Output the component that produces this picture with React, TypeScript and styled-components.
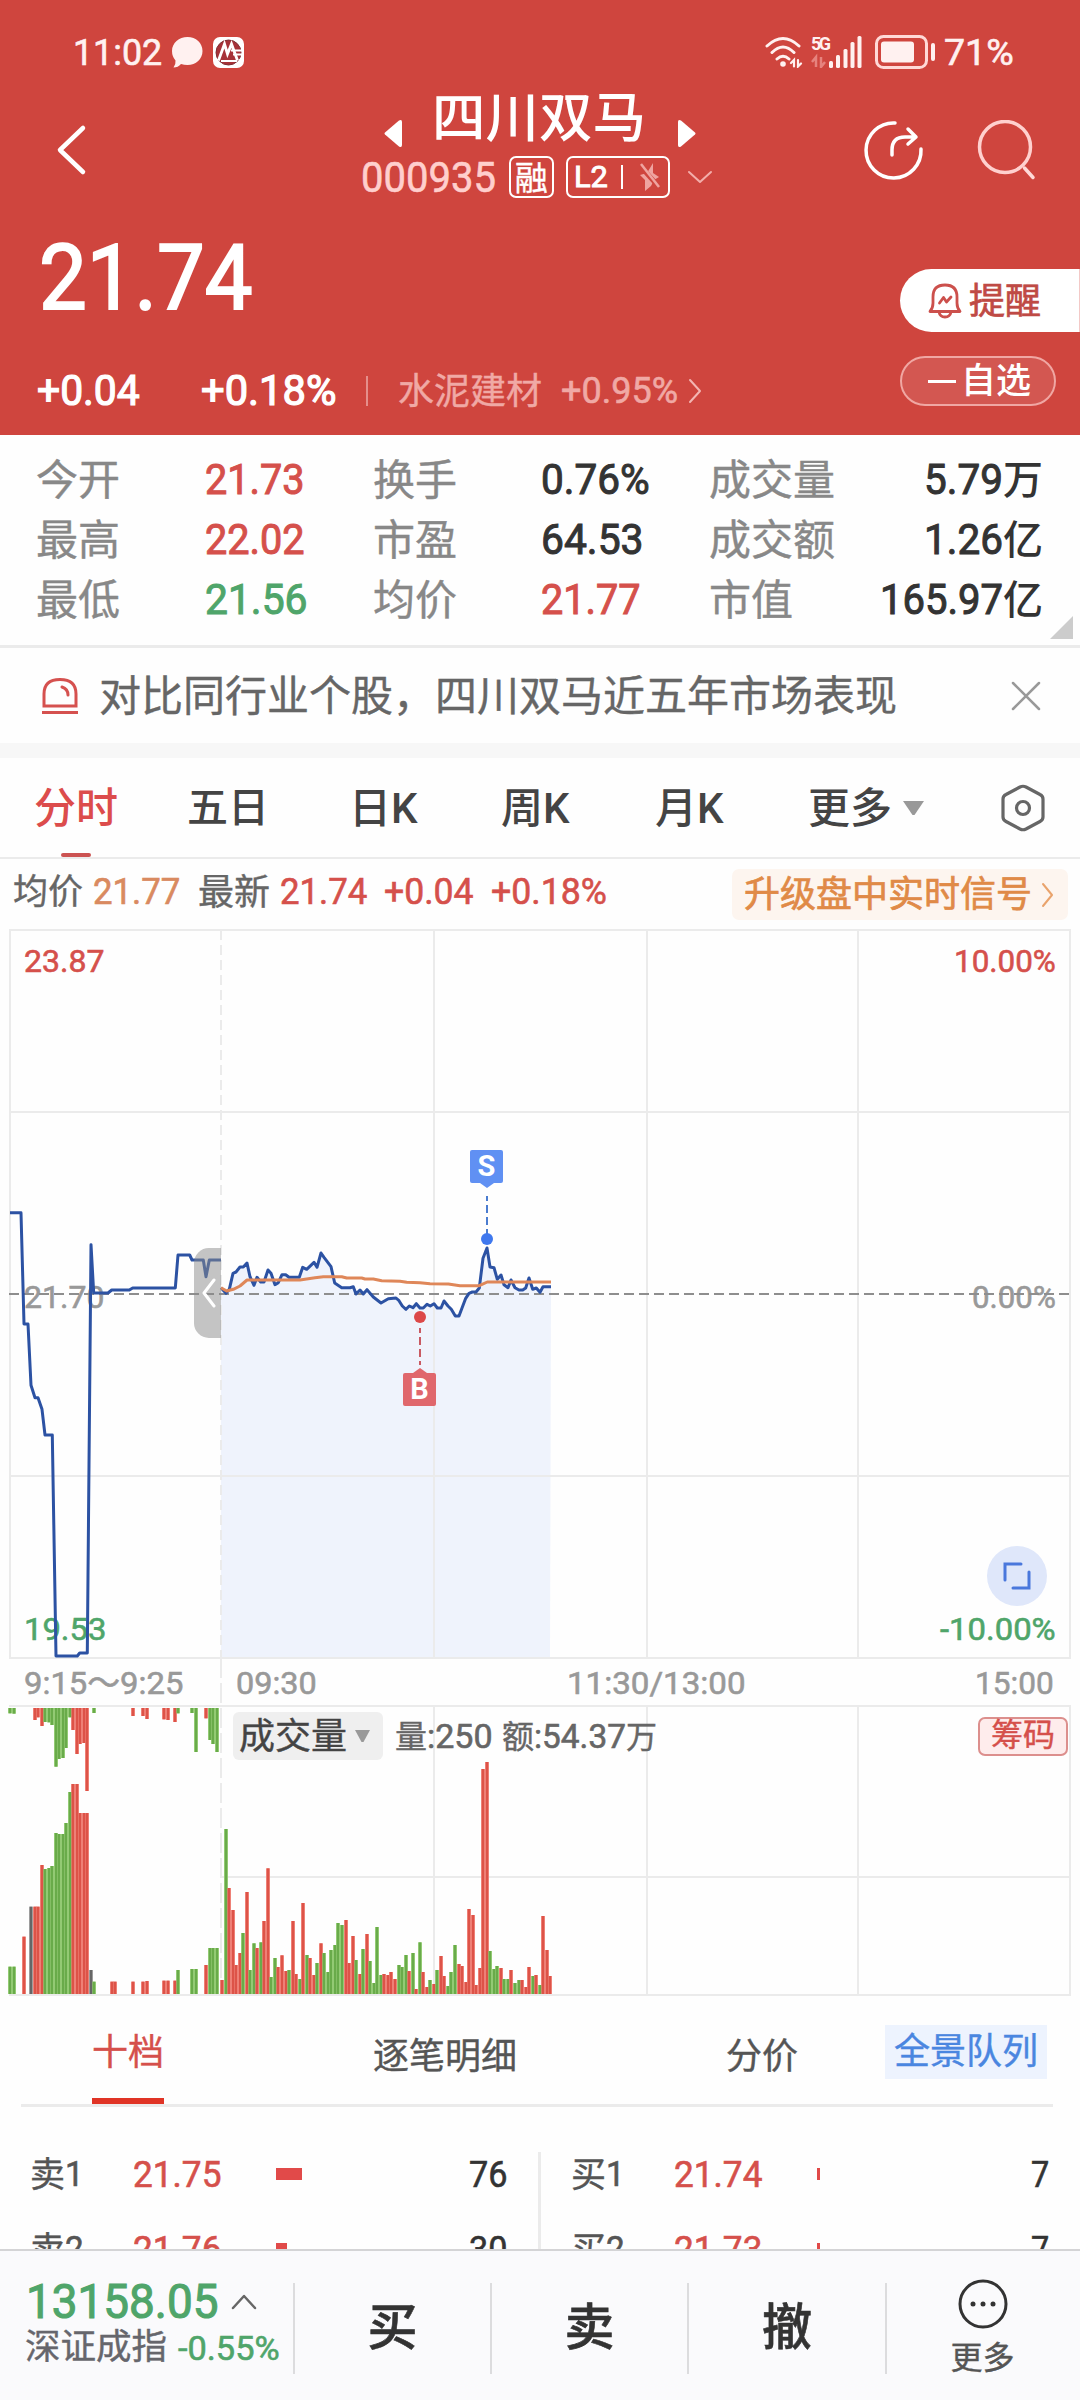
import React, { useLayoutEffect, useRef, useState } from "react";
import styled, { createGlobalStyle, css } from "styled-components";

const RED = "#d5504b";
const GREEN = "#4fa56a";
const HEAD = "#cf453e";
const LINE = "#ebebeb";

const Global = createGlobalStyle`
  *, *::before, *::after { box-sizing: border-box; }
  body { margin: 0; background: #fff; }
  svg { display: block; flex: none; }
`;

const Page = styled.div`
  width: 1080px;
  height: 2400px;
  display: flex;
  flex-direction: column;
  overflow: hidden;
  background: #fefefe;
  color: #333;
  font-family: Roboto, "Noto Sans CJK SC", sans-serif;
`;

/* ---------- text ---------- */

type TextProps = { $size: number; $color?: string; $weight?: number; $ml?: number; $dy?: number; $ink?: number };

const Text = styled.span<TextProps>`
  display: block;
  flex: none;
  white-space: nowrap;
  font-size: ${(p) => p.$size}px;
  line-height: ${(p) => p.$size}px;
  font-weight: ${(p) => p.$weight ?? 400};
  color: ${(p) => p.$color ?? "inherit"};
  margin-left: ${(p) => p.$ml ?? 0}px;
  -webkit-text-stroke: ${(p) => p.$ink ?? (p.$weight ? 0 : 0.4)}px currentColor;
  padding-top: ${(p) => p.$dy ?? 2}px;
`;

const FitBox = styled(Text)<{ $w: number }>`
  width: ${(p) => p.$w}px;
`;

const FitInner = styled.span`
  display: inline-block;
  transform-origin: 0 50%;
`;

/* Condensed figures: the text is squeezed horizontally to the given width. */
function Fit({ w, size, color, ink = 0.6, ml, dy = 0, children }: {
  w: number; size: number; color?: string; ink?: number; ml?: number; dy?: number; children: React.ReactNode;
}) {
  const ref = useRef<HTMLSpanElement>(null);
  const [k, setK] = useState(1);
  useLayoutEffect(() => {
    if (ref.current) setK(w / ref.current.offsetWidth);
  }, [w, size]);
  return (
    <FitBox $w={w} $size={size} $color={color} $ink={ink} $ml={ml} $dy={dy}>
      <FitInner ref={ref} style={{ transform: `scaleX(${k})` }}>{children}</FitInner>
    </FitBox>
  );
}

/* ---------- header ---------- */

const Header = styled.header`
  height: 435px;
  flex: none;
  background: ${HEAD};
  color: #fff;
`;

const StatusBar = styled.div`
  height: 80px;
  padding: 24px 66px 0 73px;
  display: flex;
  justify-content: space-between;
`;

const StatusGroup = styled.div<{ $gap: number }>`
  display: flex;
  align-items: center;
  gap: ${(p) => p.$gap}px;
  height: 56px;
`;

const Nav = styled.div`
  height: 140px;
  display: grid;
  grid-template-columns: 363px 350px 1fr;
  align-items: center;
`;

const BackBox = styled.div`padding-left: 55px;`;

const TitleBlock = styled.div`height: 140px;`;

const TitleRow = styled.div`
  height: 71px;
  padding-left: 21px;
  display: flex;
  align-items: center;
`;

const TriBox = styled.div<{ $ml?: number }>`
  padding-top: 35px;
  margin-left: ${(p) => p.$ml ?? 0}px;
`;

const CodeRow = styled.div`
  height: 52px;
  margin-left: -2px;
  display: flex;
  align-items: center;
`;

const Badge = styled.div<{ $w: number; $ml: number }>`
  width: ${(p) => p.$w}px;
  height: 42px;
  margin-left: ${(p) => p.$ml}px;
  border: 2px solid #fff;
  border-radius: 7px;
  display: flex;
  align-items: center;
  justify-content: center;
`;

const Rule = styled.i<{ $h: number; $ml?: number; $color: string; $w?: number }>`
  display: block;
  flex: none;
  width: ${(p) => p.$w ?? 2}px;
  height: ${(p) => p.$h}px;
  margin-left: ${(p) => p.$ml ?? 0}px;
  background: ${(p) => p.$color};
`;

const NavActions = styled.div`
  display: flex;
  gap: 50px;
  padding-left: 151px;
`;

const PriceArea = styled.div`
  height: 215px;
  display: flex;
  justify-content: space-between;
`;

const PriceCol = styled.div`padding: 13px 0 0 37px;`;

const ChangeRow = styled.div`
  height: 60px;
  margin-top: 37px;
  display: flex;
  align-items: center;
`;

const ActionCol = styled.div`
  width: 180px;
  padding-top: 49px;
  display: flex;
  flex-direction: column;
  gap: 24px;
`;

const Remind = styled.div`
  height: 63px;
  padding-left: 28px;
  border-radius: 32px 0 0 32px;
  border-right: 1px solid #f3c9c7;
  background: #fff;
  display: flex;
  align-items: center;
`;

const Favorite = styled.div`
  width: 156px;
  height: 50px;
  padding-left: 26px;
  border: 2px solid #f0a7a3;
  border-radius: 25px;
  background: rgba(255, 255, 255, 0.1);
  display: flex;
  align-items: center;
`;

/* ---------- figures ---------- */

const Stats = styled.section`
  position: relative;
  flex: none;
  height: 213px;
  padding: 15px 37px 0 36px;
  border-bottom: 3px solid ${LINE};
  display: grid;
  grid-template-columns: 169px 168px 168px 168px 130px 1fr;
  grid-auto-rows: 60px;
  align-items: center;
`;

const Joined = styled.div<{ $end?: boolean }>`
  display: flex;
  align-items: center;
  justify-content: ${(p) => (p.$end ? "flex-end" : "flex-start")};
`;

const Corner = styled.svg`
  position: absolute;
  right: 7px;
  bottom: 6px;
`;

const Tip = styled.section`
  flex: none;
  height: 95px;
  padding: 0 39px 0 41px;
  display: flex;
  align-items: center;
  justify-content: space-between;
`;

const Band = styled.div`
  flex: none;
  height: 15px;
  background: #f7f7f7;
`;

const Tabs = styled.nav`
  flex: none;
  height: 101px;
  padding-left: 34px;
  border-bottom: 2px solid ${LINE};
  display: grid;
  grid-template-columns: 153px 162px 152px 154px 153px 192px 1fr;
`;

const Tab = styled.div<{ $active?: boolean }>`
  position: relative;
  height: 99px;
  display: flex;
  align-items: center;
  gap: 10px;
  color: ${(p) => (p.$active ? "#dc4c4c" : "#444")};
  ${(p) => p.$active && css`
    &::after {
      content: "";
      position: absolute;
      left: 27px;
      bottom: 0;
      width: 30px;
      height: 4px;
      border-radius: 2px;
      background: #cc5352;
    }
  `}
`;

const Legend = styled.div`
  flex: none;
  height: 69px;
  padding: 0 12px 0 13px;
  display: flex;
  justify-content: space-between;
`;

const LegendItems = styled.div`
  height: 65px;
  display: flex;
  align-items: center;
`;

const Signal = styled.div`
  width: 336px;
  height: 51px;
  margin-top: 10px;
  padding: 0 14px 0 12px;
  border-radius: 7px;
  background: #fdf5ef;
  display: flex;
  align-items: center;
  justify-content: space-between;
`;

/* ---------- chart ---------- */

const ChartBlock = styled.section`
  position: relative;
  flex: none;
  height: 1070px;
  display: grid;
  grid-template-rows: 731px 47px 292px;
`;

const ChartSvg = styled.svg`
  position: absolute;
  left: 0;
  top: 0;
`;

const Scale = styled.div`
  display: grid;
  grid-template-columns: 1fr auto;
  grid-template-rows: 66px 605px 48px;
  padding: 0 24px;
  align-items: center;
`;

const TimeAxis = styled.div`
  padding: 0 26px 0 24px;
  display: flex;
  align-items: center;
`;

const Spring = styled.i<{ $w?: number }>`
  flex: ${(p) => (p.$w ? "none" : "1")};
  width: ${(p) => p.$w ?? 0}px;
`;

const VolumeBar = styled.div`
  position: relative;
  z-index: 1;
  height: 60px;
  padding: 0 12px 0 233px;
  display: flex;
  align-items: center;
`;

const Picker = styled.div`
  width: 150px;
  height: 48px;
  padding: 0 12px 0 6px;
  border-radius: 6px;
  background: #efefef;
  display: flex;
  align-items: center;
  justify-content: space-between;
`;

const Chips = styled.div`
  width: 90px;
  height: 39px;
  border: 2px solid #dc8f8d;
  border-radius: 7px;
  background: #feecec;
  display: flex;
  justify-content: center;
`;

const Handle = styled.div`
  position: absolute;
  left: 194px;
  top: 320px;
  width: 27px;
  height: 90px;
  padding-left: 7px;
  border-radius: 15px 0 0 15px;
  background: rgba(138, 138, 138, 0.5);
  display: flex;
  align-items: center;
`;

const Expand = styled.div`
  position: absolute;
  left: 987px;
  top: 618px;
  width: 60px;
  height: 60px;
  border-radius: 50%;
  background: #dfe7fa;
  display: flex;
  align-items: center;
  justify-content: center;
`;

const Marker = styled.div<{ $x: number; $y: number; $bg: string; $down?: boolean }>`
  position: absolute;
  left: ${(p) => p.$x}px;
  top: ${(p) => p.$y}px;
  width: 33px;
  height: 33px;
  border-radius: 2px;
  background: ${(p) => p.$bg};
  color: #fff;
  font: 700 29px/33px Roboto, sans-serif;
  text-align: center;
  &::after {
    content: "";
    position: absolute;
    left: 10px;
    ${(p) => (p.$down ? "top: 33px; border-top" : "bottom: 33px; border-bottom")}: 5px solid ${(p) => p.$bg};
    border-left: 7px solid transparent;
    border-right: 7px solid transparent;
  }
`;

/* ---------- order book ---------- */

const BookTabs = styled.nav`
  flex: none;
  height: 109px;
  margin: 0 27px 0 21px;
  border-bottom: 3px solid ${LINE};
  display: grid;
  grid-template-columns: 71px 281px 353px 159px 1fr;
`;

const BookTab = styled.div<{ $active?: boolean }>`
  justify-self: start;
  height: 106px;
  padding-top: ${(p) => (p.$active ? 35 : 39)}px;
  color: ${(p) => (p.$active ? RED : "#555")};
  border-bottom: ${(p) => (p.$active ? "6px solid #e03426" : "0")};
`;

const Panorama = styled.div`
  width: 162px;
  height: 54px;
  margin-top: 27px;
  padding: 7px 0 0 9px;
  background: #edf3fe;
`;

const Book = styled.section`
  flex: none;
  height: 142px;
  overflow: hidden;
  display: grid;
  grid-template-columns: 538px 3px 1fr;
`;

const BookSide = styled.div<{ $right?: boolean }>`
  height: 180px;
  padding: ${(p) => (p.$right ? "30px 31px 0 30px" : "30px 31px 0 30px")};
`;

const BookDivider = styled.div`
  margin-top: 45px;
  background: ${LINE};
`;

const BookRow = styled.div`
  height: 75px;
  display: grid;
  grid-template-columns: 103px 143px 1fr auto;
  align-items: center;
`;

const DepthBar = styled.i`
  display: block;
  height: 12px;
  margin-top: -2px;
  background: #e14a49;
`;

/* ---------- bottom bar ---------- */

const Footer = styled.footer`
  flex: none;
  height: 151px;
  border-top: 2px solid #d4d4d6;
  background: #fafafc;
  display: grid;
  grid-template-columns: 293px 197px 197px 198px 1fr;
`;

const IndexCol = styled.div`
  padding: 28px 0 0 25px;
`;

const IndexRow = styled.div<{ $h: number }>`
  height: ${(p) => p.$h}px;
  display: flex;
  align-items: center;
`;

const TradeButton = styled.div`
  margin: 32px 0 33px;
  border-left: 2px solid #dcdcde;
  padding-bottom: 4px;
  display: flex;
  align-items: center;
  justify-content: center;
`;

const More = styled.div`
  margin: 32px 0 33px;
  padding-right: 2px;
  border-left: 2px solid #dcdcde;
  display: flex;
  flex-direction: column;
  align-items: center;
  gap: 11px;
`;

const MoreIcon = styled.svg`
  margin-top: -4px;
`;

/* ---------- data ---------- */

type Pt = [number, number];
const parse = (s: string, dx: number, dy: number): Pt[] =>
  s.trim().split(/\s+/).map((p) => {
    const [x, y] = p.split(",").map(Number);
    return [x / 3 + dx, y / 3 + dy];
  });
const toStr = (pts: Pt[]) => pts.map(([x, y]) => `${x.toFixed(1)},${y.toFixed(1)}`).join(" ");

const auction = parse(
  "30,158 63,158 72,492 84,492 93,676 105,713 114,713 126,748 135,825 157,825 168,1488 232,1488 239,1479 262,1479 273,254 281,399 324,399 335,390 388,390 398,384 526,384 534,285 569,285 576,300 610,300 618,350 628,300 663,300",
  0, 232);

const price = parse(
  "63,473 78,490 88,478 99,430 108,426 120,411 130,411 141,399 150,440 162,466 171,442 182,456 192,456 204,420 213,430 225,464 235,458 246,434 257,434 267,442 298,442 308,412 320,418 342,397 351,412 363,369 372,382 393,410 404,459 425,473 450,473 460,470 468,492 480,480 490,492 501,479 520,501 543,519 565,506 588,504 597,512 607,528 618,538 628,528 639,533 649,521 660,534 670,534 681,523 691,528 702,521 712,534 723,534 732,513 744,528 754,538 766,558 777,558 797,505 807,490 817,486 828,486 838,474 849,385 861,354 870,411 882,413 892,448 903,435 912,464 924,473 933,450 945,473 957,480 968,480 977,474 987,444 998,478 1009,474 1020,487 1029,470 1053,470",
  200, 202);

const average = parse(
  "63,473 80,483 100,478 120,468 141,450 300,450 345,443 370,440 425,440 440,444 485,444 495,447 520,447 545,452 600,454 620,457 660,458 690,461 745,462 780,467 838,467 862,456 1053,456",
  200, 202);

const auctionVolume =
  "G30:980 G42:980 R72:890 K93:800 R105:800 R114:800 R126:675 G135:687 G147:684 G156:678 G168:579 G177:582 G189:582 G198:549 G210:456 R219:432 R231:432 R240:519 R252:519 R261:519 K273:990 G282:1025 R336:1025 R345:1025 R399:1025 R429:1025 R441:1023 R492:1022 R504:1022 R525:1022 G534:990 G576:987 G588:987 R618:975 G630:924 G639:924 G651:924";

const unmatched =
  "G30:220 G42:221 R105:240 R114:232 R126:258 G135:246 G147:247 G156:255 G168:380 G177:357 G189:354 G198:324 G210:232 R219:270 R231:342 R240:312 R252:309 R261:453 G282:219 R399:228 R429:228 R441:237 R492:238 R504:240 R525:246 G534:220 G576:219 G588:336 R618:235 G630:300 G639:312 G651:336";

const volume =
  "R66:870 G78:417 R87:594 R99:660 R108:825 R120:789 G129:729 R141:606 G150:840 G162:760 R171:774 G183:757 R192:693 R204:535 G213:861 G225:804 R234:831 R246:796 R258:843 G267:840 R279:693 R288:852 G300:867 R309:639 G321:795 R330:804 R342:855 G351:819 R363:760 G372:789 G384:846 G393:780 G405:765 G414:699 G426:705 R438:690 R447:819 R459:738 G468:810 R480:852 G489:777 R501:732 G510:813 G522:879 G531:711 G543:855 R552:852 R564:855 R573:846 R585:867 G597:825 G606:831 G618:795 R627:843 G639:789 R648:897 G660:757 R669:846 R681:891 G690:870 R702:882 G711:840 R723:798 R732:858 G744:888 G753:846 G765:765 R777:822 R786:828 R798:876 R807:657 R819:675 R828:885 R840:834 R849:237 R861:216 G870:783 G882:837 G891:828 R903:834 G912:867 G924:867 R933:840 G945:879 G957:870 R966:870 R978:891 R987:831 G999:858 R1008:855 G1020:885 R1029:678 R1041:780 R1050:858";

type Bar = { c: string; x: number; y: number };
const bars = (s: string, dx: number, dy: number): Bar[] =>
  s.split(" ").map((b) => {
    const [x, y] = b.slice(1).split(":").map(Number);
    return { c: b[0], x: x / 3 + dx, y: y / 3 + dy };
  });

const CORE: Record<string, string> = { G: "#69ab4a", R: "#dd5348", K: "#666" };
const EDGE: Record<string, string> = { G: "#aadb8c", R: "#f79a90", K: "#bbb" };

function Bars({ data, base }: { data: Bar[]; base: number }) {
  const box = (b: Bar, w: number) => ({
    x: b.x - w / 2,
    y: Math.min(b.y, base),
    width: w,
    height: Math.abs(base - b.y),
  });
  return (
    <g>
      {data.map((b, i) => <rect key={`e${i}`} {...box(b, 4)} fill={EDGE[b.c]} />)}
      {data.map((b, i) => <rect key={`c${i}`} {...box(b, 2.7)} fill={CORE[b.c]} />)}
    </g>
  );
}

function ChartDrawing() {
  const area = `${toStr(price)} 550,729 221,729`;
  return (
    <ChartSvg width="1080" height="1070" viewBox="0 0 1080 1070" fill="none">
      <polygon points={area} fill="#3c78e8" fillOpacity="0.08" />
      <g stroke={LINE} strokeWidth="2">
        <path d="M9 2H1071M10 184H1070M10 548H1070M9 730H1071M10 1V730M1070 1V730" />
        <path d="M434 2V730M647 2V730M858 2V730" />
        <path d="M9 778H1071M221 949H1070M9 1067H1071M434 778V1067M647 778V1067M858 778V1067M1070 778V1067" />
        <path d="M221 2V730" strokeDasharray="10 5" />
        <path d="M221 730V1067" strokeDasharray="20 5" />
      </g>
      <path d="M9 366H1070" stroke="#8e8e8e" strokeWidth="2" strokeDasharray="10 5" />
      <Bars data={bars(auctionVolume, 0, 712)} base={1066} />
      <Bars data={bars(unmatched, 0, 712)} base={780} />
      <Bars data={bars(volume, 200, 762)} base={1066} />
      <g strokeLinejoin="round" strokeWidth="3">
        <polyline points={toStr(auction)} stroke="#2c52a3" />
        <polyline points={toStr(price)} stroke="#2c52a3" />
        <polyline points={toStr(average)} stroke="#df8759" />
      </g>
      <path d="M487 268V306" stroke="#4a7cd0" strokeWidth="2" strokeDasharray="8 4" strokeDashoffset="3" />
      <circle cx="487" cy="311" r="6" fill="#3f78ee" />
      <circle cx="420" cy="389" r="6" fill="#dc4848" />
      <path d="M420 400V437" stroke="#c95a62" strokeWidth="2" strokeDasharray="8 4" strokeDashoffset="3" />
    </ChartSvg>
  );
}

/* ---------- icons ---------- */

const WifiIcon = () => (
  <svg width="38" height="32" viewBox="0 0 38 32" fill="none" stroke="#fff1f0" strokeWidth="3" strokeLinecap="round">
    <path d="M2 10Q18 -5 34 10M7 16.5Q18 5.5 29 16.5M12 23Q18 17.500 24 23" />
    <circle cx="18" cy="28" r="2.800" fill="#fff1f0" stroke="none" />
    <path d="M26 27L29 24V30.500M33 24V30.500L36 27.500" strokeWidth="2.200" />
  </svg>
);

const NetBox = styled.div`
  position: relative;
  width: 52px;
  height: 32px;
  margin-right: 4px;
  font: 700 18px/16px Roboto, sans-serif;
  color: #fff1f0;
  letter-spacing: -2.5px;
`;
const NetBars = styled.svg`
  position: absolute;
  left: 0;
  top: 0;
`;

const Network = () => (
  <NetBox>
    5G
    <NetBars width="52" height="32" viewBox="0 0 52 32">
      <g fill="#fff1f0">
        <rect x="18" y="25" width="4" height="7" rx="1.500" />
        <rect x="25" y="19" width="4" height="13" rx="1.500" />
        <rect x="32.500" y="13" width="4" height="19" rx="1.500" />
        <rect x="39.500" y="6" width="4" height="26" rx="1.500" />
        <rect x="46.500" y="0" width="4" height="32" rx="1.500" />
      </g>
      <path d="M1 26L5 21V31M10 21V31L14 26" fill="none" stroke="#e6837e" strokeWidth="2.500" />
    </NetBars>
  </NetBox>
);

const BatteryIcon = () => (
  <svg width="61" height="34" viewBox="0 0 61 34">
    <rect x="1.500" y="1.500" width="50" height="31" rx="7" fill="none" stroke="#ffd9d7" strokeWidth="3" />
    <rect x="6" y="6.500" width="33" height="21" rx="3" fill="#fff1f0" />
    <rect x="56" y="8" width="4" height="18" rx="2" fill="#fff1f0" />
  </svg>
);

const ChatIcon = () => (
  <svg width="31" height="32" viewBox="0 0 31 32">
    <path d="M15.500 1C24 1 30.500 7 30.500 15S24 29 15.500 29Q12 29 9 28Q6 31.500 1.500 31.500Q4 28 3.500 24.500Q0 20.500 0 15C0 7 7 1 15.500 1Z" fill="#fff1f0" />
  </svg>
);

const BankIcon = () => (
  <svg width="31" height="31" viewBox="0 0 31 31" fill="none">
    <rect width="31" height="31" rx="7" fill="#fff" />
    <circle cx="15.500" cy="15.500" r="12.500" fill="#a63238" stroke="#7d2c32" />
    <path d="M5.500 23.500L11.500 7L14.500 17L18.500 7L24.500 23.500" stroke="#fff" strokeWidth="2.800" />
    <path d="M8 24H24M18 13.500H29M20 17.500H29" stroke="#fff" strokeWidth="1.800" />
  </svg>
);

const Tri = ({ flip }: { flip?: boolean }) => (
  <svg width="18" height="27" viewBox="0 0 18 27">
    <path d={flip ? "M17 12.500Q18 13.500 17 14.500L3 26.500Q0 28 0 25V2Q0 -1 3 .5Z" : "M1 12.500Q0 13.500 1 14.500L15 26.500Q18 28 18 25V2Q18 -1 15 .5Z"} fill="#fff" />
  </svg>
);

const Chevron = ({ w, h, d, color, sw = 2 }: { w: number; h: number; d: string; color: string; sw?: number }) => (
  <svg width={w} height={h} viewBox={`0 0 ${w} ${h}`} fill="none" stroke={color} strokeWidth={sw} strokeLinecap="round" strokeLinejoin="round">
    <path d={d} />
  </svg>
);

const Caret = ({ w, h }: { w: number; h: number }) => (
  <svg width={w} height={h}><path d={`M1 0H${w - 1}L${w / 2 + 1} ${h}H${w / 2 - 1}Z`} fill="#999" /></svg>
);

const FlashOff = () => (
  <svg width="22" height="30" viewBox="0 0 22 30">
    <path d="M14 1L8 11L1 13L6 18L6 29L12 24L15 18L20 15L14 11Z" fill="#efa4a0" />
    <path d="M1 4L21 26" stroke={HEAD} strokeWidth="5" />
    <path d="M2 2L20 25" stroke="#efa4a0" strokeWidth="2.500" />
  </svg>
);

const ShareIcon = () => (
  <svg width="60" height="60" viewBox="0 0 60 60" fill="none" stroke="#fff" strokeWidth="3.500" strokeLinecap="round" strokeLinejoin="round">
    <path d="M31 3A27.500 27.500 0 1 0 57 29" />
    <path d="M28 35V30Q28 17 41 17H51M44 9L52 17L44 24" />
  </svg>
);

const SearchIcon = () => (
  <svg width="62" height="60" viewBox="0 0 62 60" fill="none" stroke="#ffd0ce" strokeWidth="3.500" strokeLinecap="round">
    <circle cx="31" cy="27" r="25.500" />
    <path d="M50.500 48L59 57.500" stroke="#ffd9d7" />
  </svg>
);

const BellIcon = () => (
  <svg width="34" height="36" viewBox="0 0 34 36" fill="none" stroke="#cc504c" strokeWidth="2.800" strokeLinecap="round" strokeLinejoin="round">
    <path d="M5 20V14Q5 2 17 2T29 14V20Q29 25 32 28.500H2Q5 25 5 20Z" />
    <path d="M11 29Q12 34 17 34T23 29M11.500 20L15.500 14.500L18.500 19L23 14" />
  </svg>
);

const SirenIcon = () => (
  <svg width="38" height="38" viewBox="0 0 38 38" fill="none" stroke="#d5514f" strokeWidth="3">
    <path d="M3 29V17Q3 2.500 19 2.500T35 17V29Z" />
    <path d="M21 10Q27 12 27 18" strokeLinecap="round" />
    <path d="M1 35.500H37" />
  </svg>
);

const HexIcon = () => (
  <svg width="46" height="48" viewBox="0 0 46 48" fill="none" stroke="#666" strokeWidth="3.200" strokeLinejoin="round">
    <path d="M20 3Q23 1.500 26 3L40 10.500Q43 12 43 15V33Q43 36 40 37.500L26 45Q23 46.500 20 45L6 37.500Q3 36 3 33V15Q3 12 6 10.500Z" />
    <circle cx="23" cy="24" r="6.500" />
  </svg>
);

/* ---------- view ---------- */

function Amount({ figure, w, unit }: { figure: string; w: number; unit: string }) {
  return (
    <Joined $end>
      <Fit w={w} size={42} ink={1}>{figure}</Fit>
      <Text $size={40} $weight={500}>{unit}</Text>
    </Joined>
  );
}

function Quote({ name, no, value, bar, qty, qw }: {
  name: string; no: string; value: string; bar: number; qty: string; qw: number;
}) {
  return (
    <BookRow>
      <Joined>
        <Text $size={35} $color="#555">{name}</Text>
        <Fit w={19} size={35} color="#555">{no}</Fit>
      </Joined>
      <Fit w={88} size={36} color={RED}>{value}</Fit>
      <DepthBar style={{ width: bar }} />
      <Fit w={qw} size={36}>{qty}</Fit>
    </BookRow>
  );
}

export default function App() {
  return (
    <>
      <Global />
      <Page>
        <Header>
          <StatusBar>
            <StatusGroup $gap={10}>
              <Fit w={89} size={37} color="#fff1f0">11:02</Fit>
              <ChatIcon />
              <BankIcon />
            </StatusGroup>
            <StatusGroup $gap={8}>
              <WifiIcon />
              <Network />
              <BatteryIcon />
              <Fit w={70} size={37} color="#fff1f0">71%</Fit>
            </StatusGroup>
          </StatusBar>
          <Nav>
            <BackBox>
              <Chevron w={32} h={52} d="M28 4L5 26L28 48" color="#fff" sw={4.5} />
            </BackBox>
            <TitleBlock>
              <TitleRow>
                <TriBox><Tri /></TriBox>
                <Text $size={53.5} $weight={500} $ml={30} $dy={6}>四川双马</Text>
                <TriBox $ml={32}><Tri flip /></TriBox>
              </TitleRow>
              <CodeRow>
                <Fit w={135} size={43} color="#ffcfcd">000935</Fit>
                <Badge $w={45} $ml={13}><Text $size={33}>融</Text></Badge>
                <Badge $w={105} $ml={12}>
                  <Fit w={34} size={29} ink={0.9}>L2</Fit>
                  <Rule $h={24} $ml={13} $color="#fff" />
                  <Spring $w={16} />
                  <FlashOff />
                </Badge>
                <Spring $w={17} />
                <Chevron w={26} h={14} d="M2 2L13 12L24 2" color="#f3aeaa" />
              </CodeRow>
            </TitleBlock>
            <NavActions>
              <ShareIcon />
              <SearchIcon />
            </NavActions>
          </Nav>
          <PriceArea>
            <PriceCol>
              <Fit w={214} size={91} ml={2} ink={2}>21.74</Fit>
              <ChangeRow>
                <Fit w={103} size={42} ink={1.2}>+0.04</Fit>
                <Fit w={135} size={42} ink={1.2} ml={61}>+0.18%</Fit>
                <Rule $h={30} $ml={30} $color="#e58f8b" />
                <Text $size={36} $ml={30} $color="#f0a9a5">水泥建材</Text>
                <Fit w={117} size={36} ml={19} color="#f0a9a5">+0.95%</Fit>
                <Spring $w={10} />
                <Chevron w={14} h={26} d="M2 2L12 13L2 24" color="#f3b5b2" />
              </ChangeRow>
            </PriceCol>
            <ActionCol>
              <Remind>
                <BellIcon />
                <Text $size={36} $ml={7} $color="#bf4a45" $ink={0.7}>提醒</Text>
              </Remind>
              <Favorite>
                <Rule $w={28} $h={3} $color="#fff" />
                <Text $size={35} $ml={5} $weight={500} $dy={0}>自选</Text>
              </Favorite>
            </ActionCol>
          </PriceArea>
        </Header>

        <Stats>
          <Text $size={42} $color="#888">今开</Text>
          <Fit w={100} size={42} color={RED} ink={1}>21.73</Fit>
          <Text $size={42} $color="#888">换手</Text>
          <Fit w={109} size={42} ink={1}>0.76%</Fit>
          <Text $size={42} $color="#888">成交量</Text>
          <Amount figure="5.79" w={79} unit="万" />
          <Text $size={42} $color="#888">最高</Text>
          <Fit w={100} size={42} color={RED} ink={1}>22.02</Fit>
          <Text $size={42} $color="#888">市盈</Text>
          <Fit w={103} size={42} ink={1}>64.53</Fit>
          <Text $size={42} $color="#888">成交额</Text>
          <Amount figure="1.26" w={79} unit="亿" />
          <Text $size={42} $color="#888">最低</Text>
          <Fit w={103} size={42} color={GREEN} ink={1}>21.56</Fit>
          <Text $size={42} $color="#888">均价</Text>
          <Fit w={100} size={42} color={RED} ink={1}>21.77</Fit>
          <Text $size={42} $color="#888">市值</Text>
          <Amount figure="165.97" w={123} unit="亿" />
          <Corner width="23" height="23"><path d="M23 0V23H0Z" fill="#ccc" /></Corner>
        </Stats>

        <Tip>
          <SirenIcon />
          <Text $size={42} $ml={20} $color="#666">对比同行业个股，四川双马近五年市场表现</Text>
          <Spring />
          <Chevron w={30} h={30} d="M2 2L28 28M28 2L2 28" color="#999" sw={2.5} />
        </Tip>
        <Band />

        <Tabs>
          <Tab $active><Text $size={42} $weight={500}>分时</Text></Tab>
          <Tab><Text $size={41} $weight={500}>五日</Text></Tab>
          <Tab><Text $size={42} $weight={500}>日K</Text></Tab>
          <Tab><Text $size={42} $weight={500}>周K</Text></Tab>
          <Tab><Text $size={42} $weight={500}>月K</Text></Tab>
          <Tab><Text $size={42} $weight={500}>更多</Text><Caret w={23} h={14} /></Tab>
          <Tab><HexIcon /></Tab>
        </Tabs>

        <Legend>
          <LegendItems>
            <Text $size={35} $color="#666">均价</Text>
            <Fit w={87} size={36} ml={10} color="#d98a60">21.77</Fit>
            <Text $size={36} $ml={18} $color="#666">最新</Text>
            <Fit w={87} size={36} ml={10} color={RED}>21.74</Fit>
            <Fit w={90} size={36} ml={17} color={RED}>+0.04</Fit>
            <Fit w={116} size={36} ml={17} color={RED}>+0.18%</Fit>
          </LegendItems>
          <Signal>
            <Text $size={36} $color="#e08a47" $ink={0.7} $dy={1}>升级盘中实时信号</Text>
            <Chevron w={13} h={26} d="M2 2L11 13L2 24" color="#e9a36c" />
          </Signal>
        </Legend>

        <ChartBlock>
          <Scale>
            <Fit w={80} size={32} color={RED}>23.87</Fit>
            <Joined $end><Fit w={102} size={32} color={RED}>10.00%</Fit></Joined>
            <Fit w={80} size={32} color="#999">21.70</Fit>
            <Joined $end><Fit w={84} size={32} color="#999">0.00%</Fit></Joined>
            <Fit w={82} size={32} dy={12} color={GREEN}>19.53</Fit>
            <Joined $end><Fit w={116} size={32} dy={12} color={GREEN}>-10.00%</Fit></Joined>
          </Scale>
          <TimeAxis>
            <Fit w={159} size={32} color="#999">9:15～9:25</Fit>
            <Fit w={81} size={32} ml={53} color="#999">09:30</Fit>
            <Fit w={179} size={32} ml={250} color="#999">11:30/13:00</Fit>
            <Spring />
            <Fit w={79} size={32} color="#999">15:00</Fit>
          </TimeAxis>
          <VolumeBar>
            <Picker>
              <Text $size={36} $color="#444">成交量</Text>
              <Caret w={17} h={12} />
            </Picker>
            <Text $size={32} $ml={12} $color="#666">量</Text>
            <Fit w={66} size={33} color="#666">:250</Fit>
            <Text $size={32} $ml={9} $color="#666">额</Text>
            <Fit w={92} size={33} color="#666">:54.37</Fit>
            <Text $size={31} $color="#666">万</Text>
            <Spring />
            <Chips><Text $size={32} $color={RED} $dy={0}>筹码</Text></Chips>
          </VolumeBar>
          <ChartDrawing />
          <Handle>
            <Chevron w={16} h={30} d="M13 2L3 15L13 28" color="#fff" sw={3} />
          </Handle>
          <Marker $x={470} $y={222} $bg="#6090f3" $down>S</Marker>
          <Marker $x={403} $y={445} $bg="#e0676c">B</Marker>
          <Expand>
            <svg width="30" height="30" viewBox="0 0 30 30" fill="none" stroke="#4a78dc" strokeWidth="3" strokeLinecap="round">
              <path d="M3 19V3H19M11 27H27V11" />
            </svg>
          </Expand>
        </ChartBlock>

        <BookTabs>
          <i />
          <BookTab $active><Text $size={36}>十档</Text></BookTab>
          <BookTab><Text $size={36}>逐笔明细</Text></BookTab>
          <BookTab><Text $size={36}>分价</Text></BookTab>
          <Panorama><Text $size={36} $color="#4a86e0">全景队列</Text></Panorama>
        </BookTabs>

        <Book>
          <BookSide>
            <Quote name="卖" no="1" value="21.75" bar={26} qty="76" qw={38} />
            <Quote name="卖" no="2" value="21.76" bar={11} qty="30" qw={38} />
          </BookSide>
          <BookDivider />
          <BookSide $right>
            <Quote name="买" no="1" value="21.74" bar={3} qty="7" qw={18} />
            <Quote name="买" no="2" value="21.73" bar={3} qty="7" qw={18} />
          </BookSide>
        </Book>

        <Footer>
          <IndexCol>
            <IndexRow $h={46}>
              <Fit w={193} size={48} ink={1.1} ml={1} color={GREEN}>13158.05</Fit>
              <Spring $w={12} />
              <Chevron w={26} h={16} d="M2 14L13 2L24 14" color="#666" sw={2.5} />
            </IndexRow>
            <IndexRow $h={46}>
              <Text $size={35.5} $color="#66666c" $dy={0}>深证成指</Text>
              <Fit w={102} size={33} ml={11} color={GREEN}>-0.55%</Fit>
            </IndexRow>
          </IndexCol>
          <TradeButton><Text $size={50} $weight={500} $ink={0.6}>买</Text></TradeButton>
          <TradeButton><Text $size={50} $weight={500} $ink={0.6}>卖</Text></TradeButton>
          <TradeButton><Text $size={50} $weight={500} $ink={0.6}>撤</Text></TradeButton>
          <More>
            <MoreIcon width="50" height="50" viewBox="0 0 50 50">
              <circle cx="25" cy="25" r="23" fill="none" stroke="#333" strokeWidth="3" />
              <g fill="#333"><circle cx="15" cy="25" r="2.500" /><circle cx="25" cy="25" r="2.500" /><circle cx="35" cy="25" r="2.500" /></g>
            </MoreIcon>
            <Text $size={32} $color="#555">更多</Text>
          </More>
        </Footer>
      </Page>
    </>
  );
}
